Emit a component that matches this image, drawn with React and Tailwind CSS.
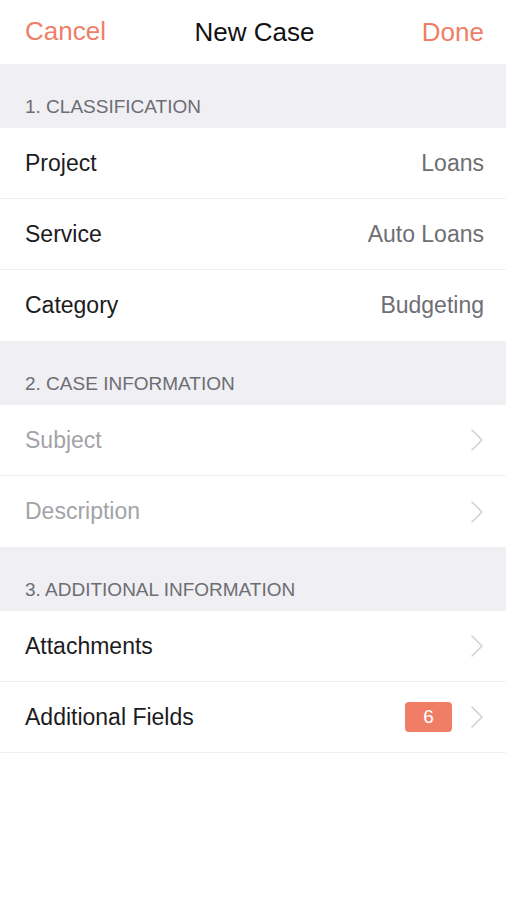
import React from 'react';

const Chevron = () => (
  <svg width="14" height="24" viewBox="0 0 14 24" fill="none" className="shrink-0">
    <path d="M2 2 L12 12 L2 22" stroke="#d1d1d6" strokeWidth="1.6" strokeLinecap="round" strokeLinejoin="round" />
  </svg>
);

const SectionHeader = ({ title }) => (
  <div className="h-[64px] bg-[#efeff4] flex items-end px-[25px] pb-[12px]">
    <span className="text-[19px] text-[#6d6d72] leading-none">{title}</span>
  </div>
);

const Row = ({ label, value, placeholder, chevron, badge, last }) => (
  <div className={`h-[71px] flex items-center pl-[25px] pr-[22px] bg-white ${last ? '' : 'border-b border-[#f0f0f2]'}`}>
    <span className={`text-[23px] leading-none flex-1 ${placeholder ? 'text-[#a3a3a8]' : 'text-[#1c1c1e]'}`}>{label}</span>
    {value && <span className="text-[23px] leading-none text-[#6e6e73]">{value}</span>}
    {badge && (
      <span className="w-[47px] h-[30px] rounded-[4px] bg-[#f07e66] text-white text-[19px] flex items-center justify-center mr-[18px]">
        {badge}
      </span>
    )}
    {chevron && <Chevron />}
  </div>
);

export default function App() {
  return (
    <div className="w-[506px] h-[900px] bg-white font-['Liberation_Sans',Arial,sans-serif] overflow-hidden">
      {/* nav bar */}
      <div className="h-[64px] flex items-center px-[22px] pl-[25px]">
        <div className="flex-1">
          <button className="text-[26px] text-[#f07e66] leading-none">Cancel</button>
        </div>
        <h1 className="text-[26px] text-[#111] leading-none">New Case</h1>
        <div className="flex-1 flex justify-end">
          <button className="text-[26px] text-[#f07e66] leading-none">Done</button>
        </div>
      </div>

      <SectionHeader title="1. CLASSIFICATION" />
      <Row label="Project" value="Loans" />
      <Row label="Service" value="Auto Loans" />
      <Row label="Category" value="Budgeting" last />

      <SectionHeader title="2. CASE INFORMATION" />
      <Row label="Subject" placeholder chevron />
      <Row label="Description" placeholder chevron last />

      <SectionHeader title="3. ADDITIONAL INFORMATION" />
      <Row label="Attachments" chevron />
      <Row label="Additional Fields" badge="6" chevron />
    </div>
  );
}
